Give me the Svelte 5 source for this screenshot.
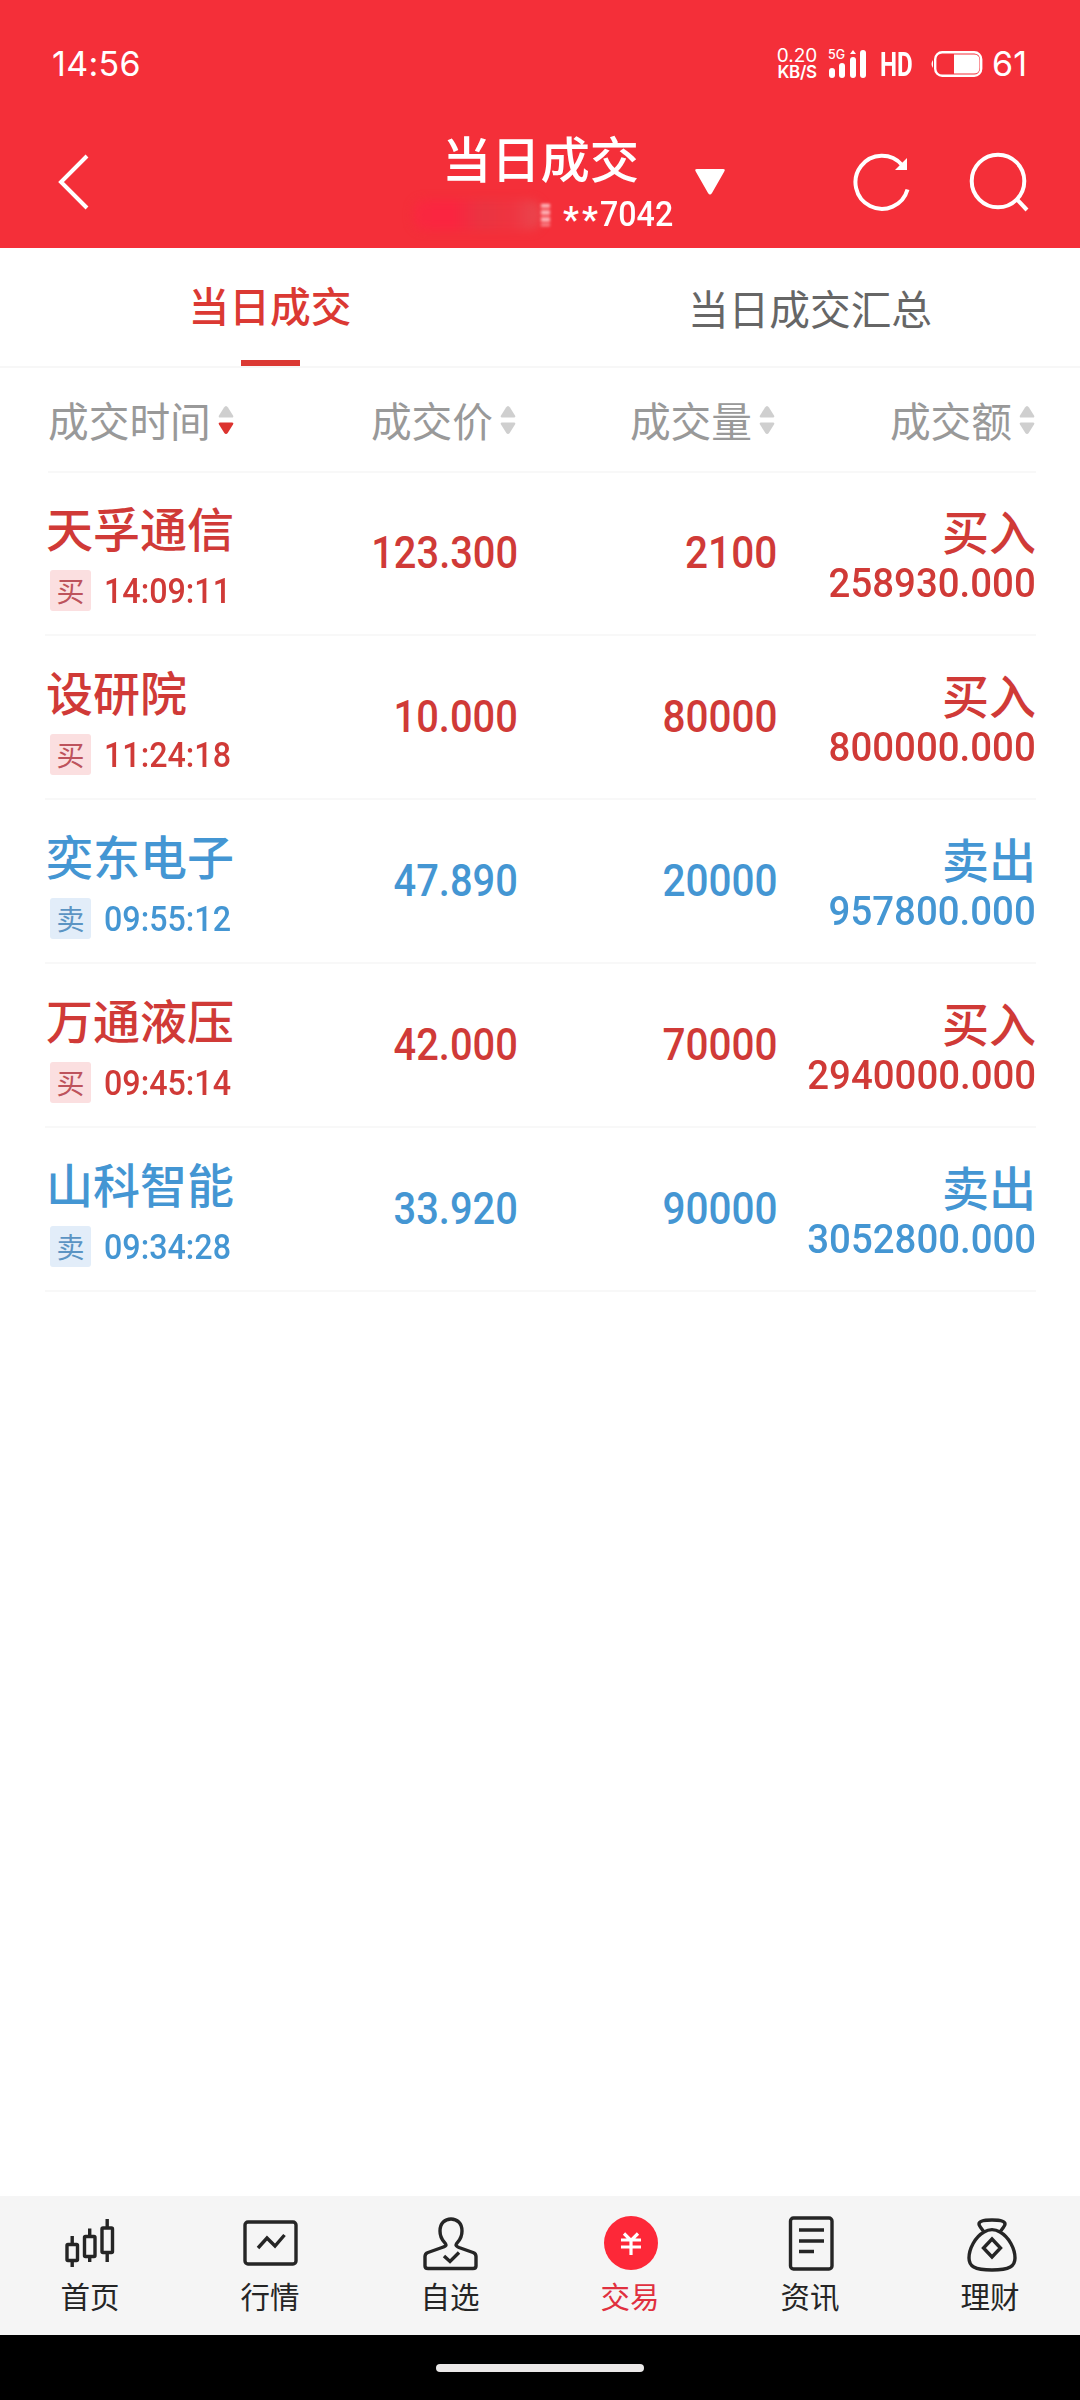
<script lang="ts">
	interface Deal {
		name: string;
		time: string;
		price: string;
		volume: string;
		amount: string;
		side: 'buy' | 'sell';
	}

	const tabs = ['当日成交', '当日成交汇总'];
	const columns = ['成交时间', '成交价', '成交量', '成交额'];
	const navItems = ['首页', '行情', '自选', '交易', '资讯', '理财'];

	const deals: Deal[] = [
		{ name: '天孚通信', time: '14:09:11', price: '123.300', volume: '2100', amount: '258930.000', side: 'buy' },
		{ name: '设研院', time: '11:24:18', price: '10.000', volume: '80000', amount: '800000.000', side: 'buy' },
		{ name: '奕东电子', time: '09:55:12', price: '47.890', volume: '20000', amount: '957800.000', side: 'sell' },
		{ name: '万通液压', time: '09:45:14', price: '42.000', volume: '70000', amount: '2940000.000', side: 'buy' },
		{ name: '山科智能', time: '09:34:28', price: '33.920', volume: '90000', amount: '3052800.000', side: 'sell' }
	];

	let activeTab = $state(0);
	let activeNav = $state(3);
	let sortColumn = $state(0);
</script>

<div class="screen">
	<header>
		<div class="status">
			<span class="clock">14:56</span>
			<div class="status-right">
				<div class="speed"><span>0.20</span><b>KB/S</b></div>
				<div class="signal">
					<span>5G</span>
					<svg width="40" height="30" viewBox="0 0 40 30" fill="#fff">
						<rect x="1" y="19" width="6" height="10" rx="3" />
						<rect x="11" y="14" width="6" height="15" rx="3" />
						<rect x="22" y="8" width="6" height="21" rx="3" />
						<path d="M22 5l3-4 3 4z" />
						<rect x="32" y="1" width="6" height="28" rx="3" />
					</svg>
				</div>
				<span class="hd">HD</span>
				<svg class="battery" width="54" height="28" viewBox="0 0 54 28" fill="none">
					<path d="M3 10q-3 4 0 8z" fill="#fff" />
					<rect x="5.2" y="2.2" width="46" height="23.6" rx="7" stroke="#fff" stroke-width="2.4" />
					<path d="M24 4.500h20q5.500 0 5.500 5.500v8q0 5.500-5.500 5.500h-20z" fill="#fff" />
				</svg>
				<span class="level">61</span>
			</div>
		</div>
		<div class="bar">
			<svg class="back" width="36" height="60" viewBox="0 0 36 60" fill="none" stroke="#fff" stroke-width="4">
				<path d="M30 4L4 30l26 26" />
			</svg>
			<div class="title">
				<h1>当日成交</h1>
				<p><i class="mask"></i><i class="mask-end"></i><span class="stars">**</span><span class="account">7042</span></p>
			</div>
			<svg class="drop" width="30" height="26" viewBox="0 0 30 26" fill="#fff">
				<path d="M2 0h26q3 0 1 3L17 24q-2 3-4 0L1 3q-2-3 1-3z" />
			</svg>
			<svg class="refresh" width="60" height="60" viewBox="0 0 60 60" fill="none" stroke="#fff" stroke-width="4">
				<path d="M55.500 37.500A26.500 26.500 0 1 1 50 13" />
				<path d="M55 6v12H43z" fill="#fff" stroke="none" />
			</svg>
			<svg width="62" height="60" viewBox="0 0 62 60" fill="none" stroke="#fff" stroke-width="4">
				<circle cx="30" cy="29" r="26.300" />
				<path d="M48.500 47l10.500 11" />
			</svg>
		</div>
	</header>

	<nav class="tabs">
		{#each tabs as tab, i}
			<button class:active={activeTab === i} onclick={() => (activeTab = i)}>{tab}</button>
		{/each}
	</nav>

	<main>
		<div class="head">
			{#each columns as column, i}
				<button class="col" onclick={() => (sortColumn = i)}>
					{column}
					<svg width="16" height="28" viewBox="0 0 16 28" fill="#cfcfcf">
						<path d="M8 0q1 0 2 1.500l5 8q1 2-1 2H2q-2 0-1-2l5-8Q7 0 8 0z" />
						<path
							class:sorted={sortColumn === i}
							d="M8 28q1 0 2-1.500l5-8q1-2-1-2H2q-2 0-1 2l5 8Q7 28 8 28z"
						/>
					</svg>
				</button>
			{/each}
		</div>

		{#each deals as deal}
			<div class="row {deal.side}">
				<div class="stock">
					<div class="name">{deal.name}</div>
					<div class="when">
						<span class="badge">{deal.side === 'buy' ? '买' : '卖'}</span>
						<span class="time">{deal.time}</span>
					</div>
				</div>
				<div class="num price"><span>{deal.price}</span></div>
				<div class="num"><span>{deal.volume}</span></div>
				<div class="total">
					<div class="side">{deal.side === 'buy' ? '买入' : '卖出'}</div>
					<div class="amount"><span>{deal.amount}</span></div>
				</div>
			</div>
		{/each}
	</main>

	<footer>
		{#each navItems as item, i}
			<button class:active={activeNav === i} onclick={() => (activeNav = i)}>
				<svg width="60" height="60" viewBox="0 0 60 60" fill="none" stroke="#252525" stroke-width="3.4">
					{#if i === 0}
						<rect x="7" y="32.500" width="10.500" height="16" rx="1" />
						<rect x="24.500" y="24.500" width="10.500" height="20" rx="1" />
						<rect x="42" y="16" width="10.500" height="24.500" rx="1" />
						<path d="M12.200 24v8M12.200 49v6M29.700 16.500v8M29.700 45v5M47.200 7v9M47.200 41v9" />
					{:else if i === 1}
						<rect x="5" y="10" width="51" height="42" rx="3" />
						<path d="M18 36l9-10 8 8 9.500-11" />
					{:else if i === 2}
						<path
							d="M26 33c0-3-6-4-6-14 0-8 5-12 11-12s11 4 11 12c0 10-6 11-6 14 0 1 1 1.500 3 2.500l14 5q3 1 3 4V54q0 2.500-3 2.500H8q-3 0-3-2.500V44.500q0-3 3-4l14-5c3-1 4-1.500 4-2.500z"
						/>
						<path d="M24 44l6 5.500 9-9" />
					{:else if i === 3}
						<circle cx="31" cy="31" r="27" fill="#fd2838" stroke="none" />
						<path d="M24 21.500l7 7 7-7M21 28h20M21 35h20M31 28v15" stroke="#fff" stroke-width="3.200" />
					{:else if i === 4}
						<rect x="10.500" y="6" width="41.500" height="51" rx="3" />
						<path d="M19 18h25M19 29h25M19 39.500h15" />
					{:else}
						<path
							d="M24 20c-2-3-5-6-5-8s2-4 13-4 13 2 13 4-3 5-5 8M24 20c5-3 11-3 16 0 9 5 15 17 15 26 0 8-5 12-23 12S9 54 9 46c0-9 6-21 15-26z"
						/>
						<path d="M32 27l8.500 9-8.500 9-8.500-9z" />
					{/if}
				</svg>
				<span>{item}</span>
			</button>
		{/each}
	</footer>
	<div class="gesture"><i></i></div>
</div>

<style>
	.screen {
		display: flex;
		flex-direction: column;
		width: 1080px;
		height: 2400px;
		background: #fff;
		font-family: 'Noto Sans CJK SC', sans-serif;
	}
	svg {
		display: block;
		flex: none;
	}
	button {
		padding: 0;
		border: 0;
		background: none;
		font: inherit;
		color: inherit;
	}

	header {
		height: 248px;
		background: #f42f39;
		color: #fff;
	}
	.status {
		display: flex;
		justify-content: space-between;
		align-items: center;
		height: 128px;
		padding: 0 53px 0 52px;
		box-sizing: border-box;
		font-family: Inter, sans-serif;
	}
	.clock,
	.level {
		font-size: 34px;
		line-height: 40px;
	}
	.clock {
		letter-spacing: 0.3px;
	}
	.status-right {
		display: flex;
		align-items: center;
	}
	.speed {
		display: flex;
		flex-direction: column;
		align-items: center;
		width: 42px;
		margin-right: 10px;
		font-size: 19px;
		line-height: 16px;
	}
	.speed b {
		font-size: 17px;
		font-weight: 600;
		letter-spacing: -0.4px;
	}
	.signal {
		display: grid;
		margin-right: 12px;
	}
	.signal > * {
		grid-area: 1 / 1;
	}
	.signal span {
		font-size: 12.5px;
		line-height: 12px;
		font-weight: 500;
	}
	.hd {
		width: 33px;
		margin-right: 17px;
		font: 700 34px/40px Roboto, sans-serif;
		transform: scaleX(0.71);
		transform-origin: left;
	}
	.battery {
		margin-right: 8px;
	}
	.bar {
		display: flex;
		align-items: center;
		height: 108px;
		padding: 0 49px 0 57px;
	}
	.title {
		display: flex;
		flex-direction: column;
		align-items: center;
		width: 272px;
		margin-left: 307px;
	}
	h1 {
		margin: 0 0 0 9px;
		font-size: 49.3px;
		font-weight: 500;
		line-height: 66px;
	}
	.title p {
		display: flex;
		align-items: center;
		justify-content: flex-end;
		width: 100%;
		height: 50px;
		margin: 0;
		font: 500 35px/50px Roboto, sans-serif;
	}
	.mask {
		width: 128px;
		height: 30px;
		border-radius: 12px;
		background: linear-gradient(90deg, #f8293f, #fb2440 30%, #e93541 55%, #ef3340 75%, #e9484f);
		filter: blur(5px);
	}
	.mask-end {
		width: 9px;
		height: 22px;
		margin-right: 13px;
		background: repeating-linear-gradient(#ffc9cc 0 3px, #f45b62 3px 7px);
		filter: blur(1.5px);
	}
	.stars {
		width: 37px;
		letter-spacing: 3px;
		font-size: 36px;
		transform: translateY(5px);
	}
	.account {
		width: 72px;
		transform: scaleX(0.92);
		transform-origin: left;
	}
	.drop {
		margin-left: 23px;
	}
	.refresh {
		margin-left: 127px;
		margin-right: 56px;
	}

	.tabs {
		display: flex;
		height: 118px;
		border-bottom: 2px solid #f7f7f7;
	}
	.tabs button {
		position: relative;
		flex: 1;
		padding-top: 2px;
		font-size: 40.7px;
		line-height: 112px;
		color: #666;
	}
	.tabs button.active {
		padding: 0 0 4px;
		font-weight: 500;
		color: #db3933;
	}
	.tabs button.active::after {
		content: '';
		position: absolute;
		left: 241px;
		bottom: 0;
		width: 59px;
		height: 6px;
		background: #db3933;
	}

	main {
		flex: 1;
		padding: 0 44px 0 45px;
	}
	.head,
	.row {
		display: grid;
		grid-template-columns: 240px 232px 259px 260px;
	}
	.head {
		height: 103px;
		margin-left: 3px;
		grid-template-columns: 237px 232px 259px 260px;
		border-bottom: 2px solid #f8f8f8;
	}
	.col {
		display: flex;
		align-items: center;
		justify-content: flex-end;
		gap: 7px;
		padding-right: 1px;
		font-size: 40.7px;
		line-height: 100px;
		color: #999;
	}
	.col:first-child {
		justify-content: flex-start;
	}
	.sorted {
		fill: #dc332f;
	}

	.row {
		height: 162px;
		border-bottom: 2px solid #f8f8f8;
	}
	.head + .row {
		margin-top: -1px;
	}
	.buy {
		color: #d03a37;
	}
	.sell {
		color: #4496d3;
	}
	.name,
	.side {
		font-size: 47px;
		font-weight: 500;
		line-height: 56px;
	}
	.name {
		margin: 27px 0 0 1px;
	}
	.when {
		display: flex;
		align-items: center;
		gap: 13px;
		margin: 15px 0 0 5px;
	}
	.badge {
		width: 41px;
		height: 41px;
		border-radius: 3px;
		font-size: 28px;
		line-height: 40px;
		text-align: center;
	}
	.buy .badge {
		background: #fbdfe0;
		color: #bd535c;
	}
	.sell .badge {
		background: #e2edf9;
		color: #5b94c3;
	}
	.time {
		font: 500 34.5px/40px Roboto, sans-serif;
		transform: scaleX(0.935);
		transform-origin: left;
	}
	.num {
		text-align: right;
		font: 500 44.5px/162px Roboto, sans-serif;
	}
	.num span,
	.amount span {
		display: inline-block;
		transform: translateX(1px) scaleX(0.91);
		transform-origin: right;
	}
	.num.price span {
		transform: translateX(1px) scaleX(0.895);
	}
	.total {
		text-align: right;
	}
	.side {
		margin-top: 30px;
	}
	.amount {
		margin-top: 1px;
		font: 500 41.3px/48px Roboto, sans-serif;
	}
	.amount span {
		transform: scaleX(0.93);
	}

	footer {
		display: grid;
		grid-template-columns: repeat(6, 1fr);
		height: 139px;
		background: #f5f5f5;
		color: #252525;
	}
	footer button {
		display: flex;
		flex-direction: column;
		align-items: center;
		padding-top: 16px;
	}
	footer span {
		margin-top: 3px;
		font-size: 29.5px;
		line-height: 40px;
	}
	footer .active {
		color: #e0303f;
	}
	.gesture {
		display: flex;
		align-items: center;
		justify-content: center;
		height: 65px;
		background: #000;
	}
	.gesture i {
		width: 208px;
		height: 8px;
		border-radius: 4px;
		background: #ebe9e9;
	}
</style>
